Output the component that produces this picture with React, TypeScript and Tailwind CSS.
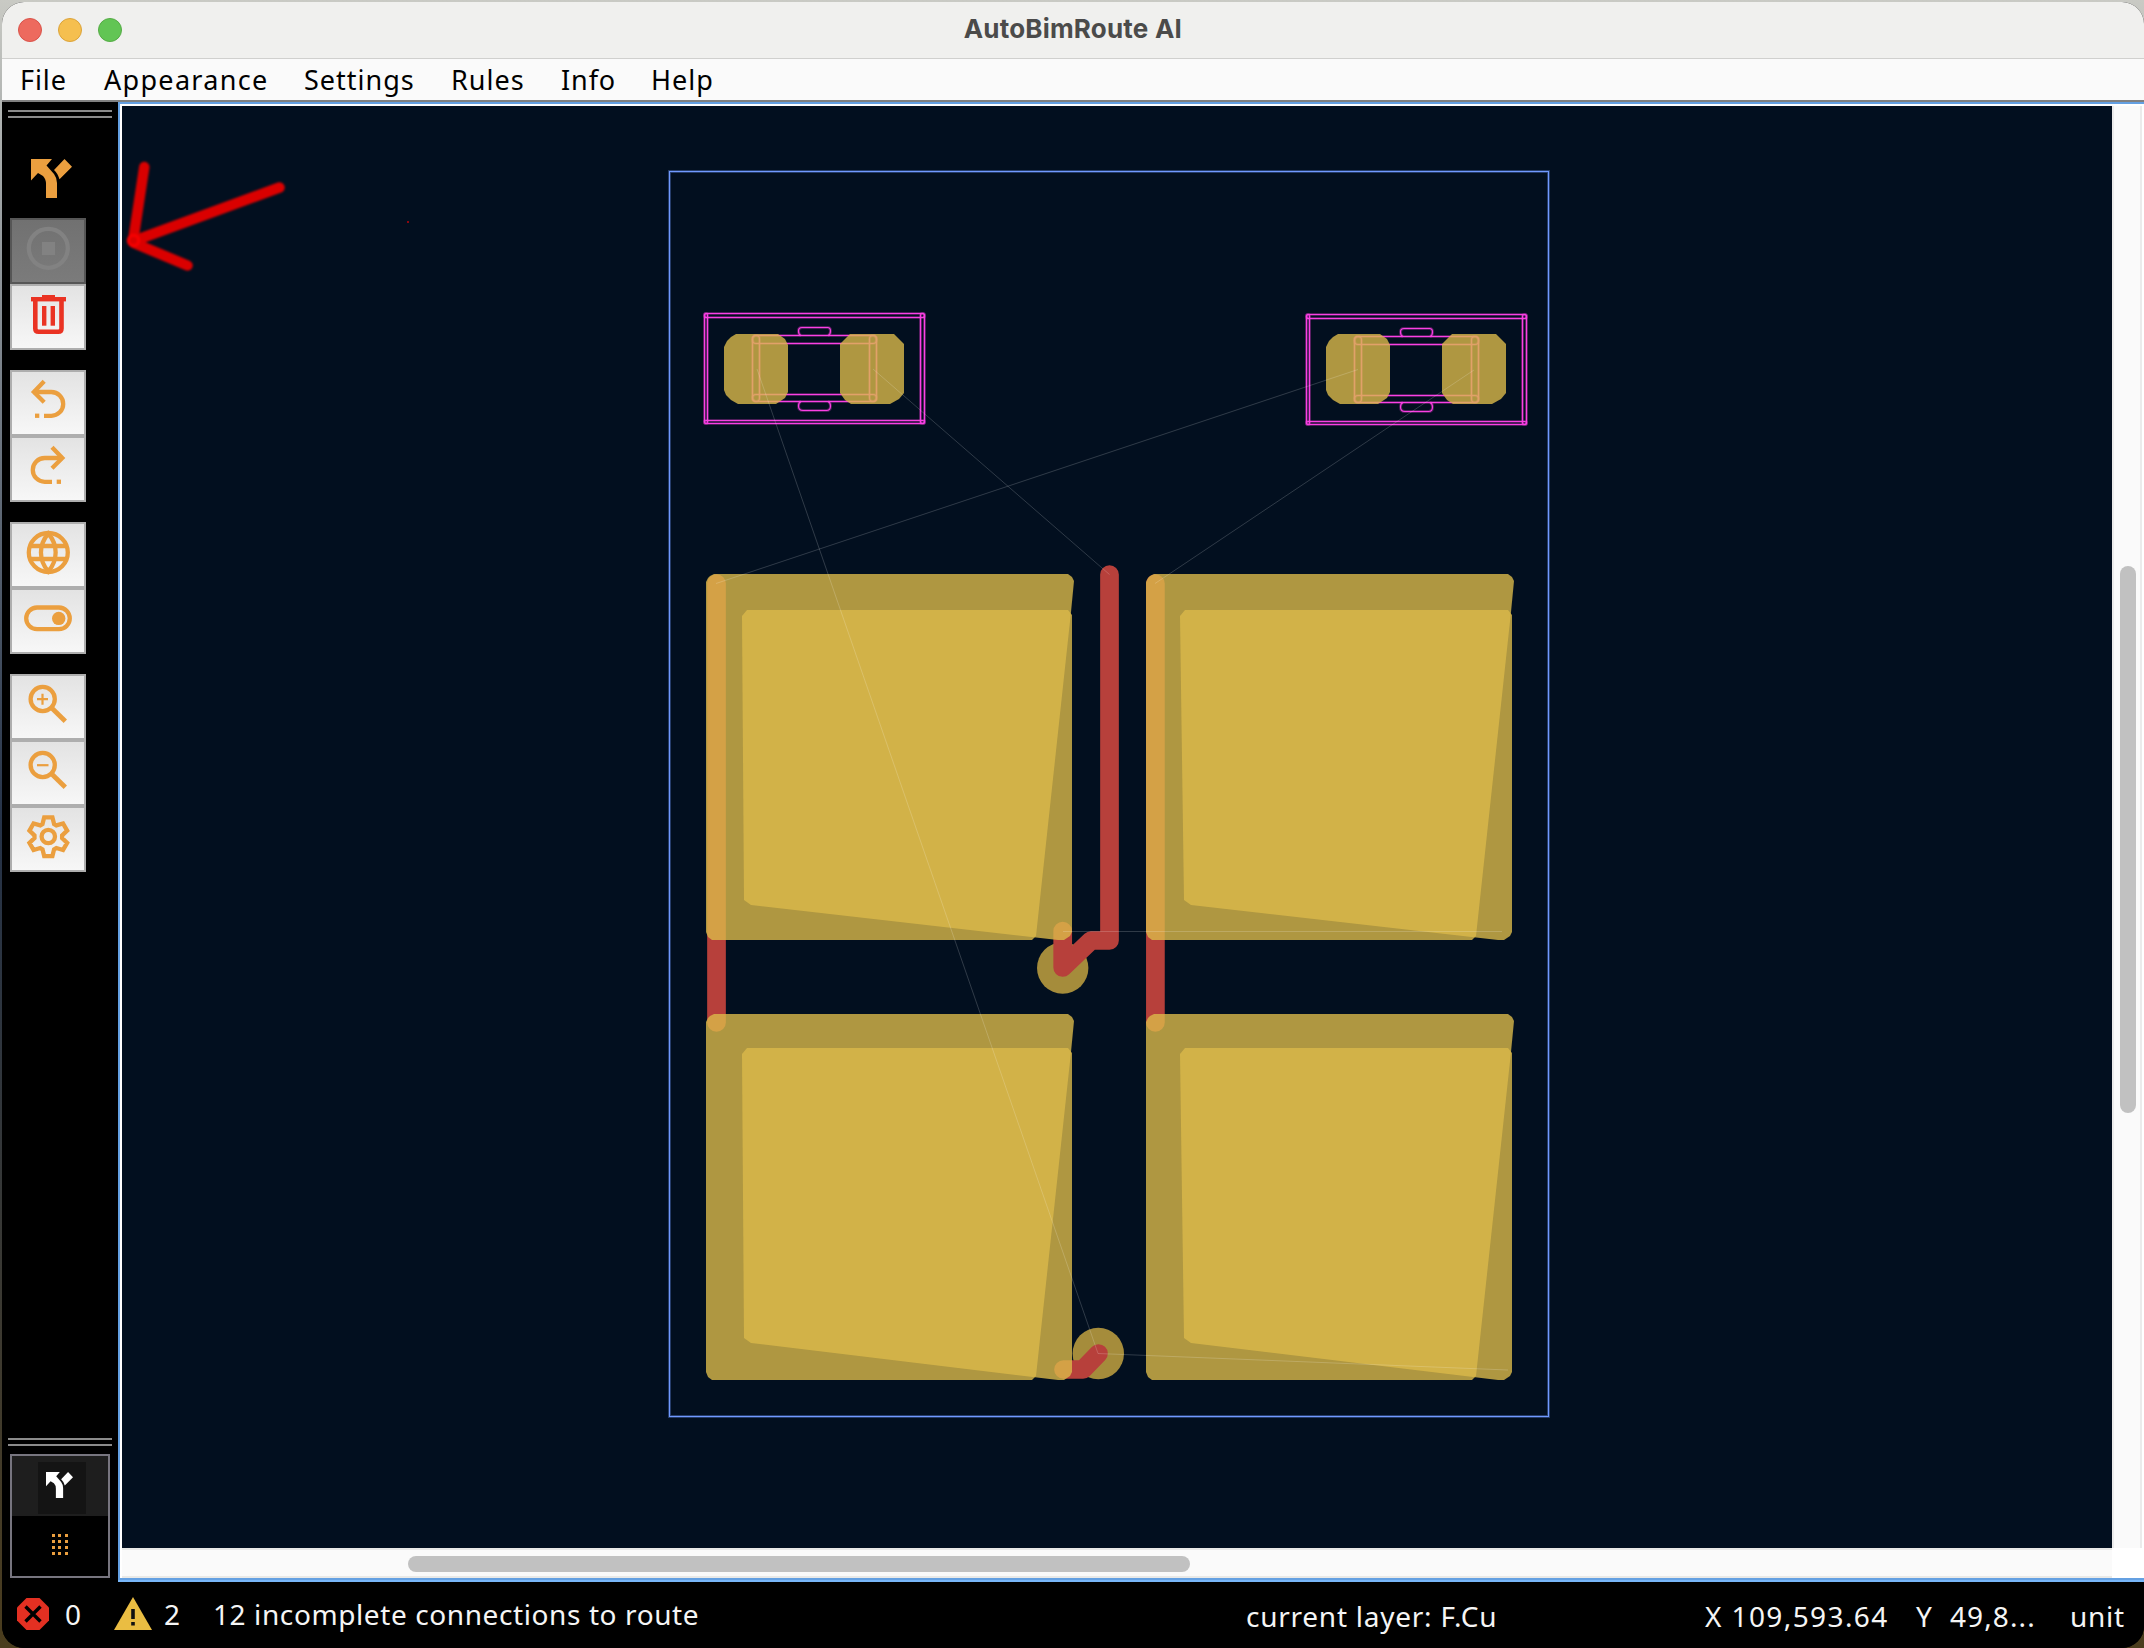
import React from "react";

const ORANGE = "#eb9f3f";

function SplitArrow({ color, className }: { color: string; className: string }) {
  return (
    <svg viewBox="0 0 41 39" preserveAspectRatio="none" className={className} fill={color}>
      <path d="M0 0H21L15.5 6.5L23 15Q26 19 26 24V39H15V25Q15 20 12 17L7 14L0 21.5Z" />
      <path d="M33.5 0L41 7.8L28.5 20.2Q26.5 14 23 11Z" />
    </svg>
  );
}

function ToolButton({ children, disabled }: { children: React.ReactNode; disabled?: boolean }) {
  return (
    <button
      className={
        disabled
          ? "block h-[66px] w-[76px] border-2 border-[#565656] bg-linear-to-b from-[#717171] to-[#7b7b7b]"
          : "block h-[66px] w-[76px] border-2 border-[#aeaeae] bg-linear-to-b from-[#e3e3e3] to-[#f7f7f7]"
      }
    >
      <svg viewBox="2 2 72 62" className="block h-[62px] w-[72px]" fill="none" stroke={ORANGE} strokeWidth={4.3}>
        {children}
      </svg>
    </button>
  );
}

function gearPoints() {
  const base = [
    [-5.8, -12.6],
    [-4.1, -19.4],
    [4.1, -19.4],
    [5.8, -12.6],
  ];
  const pts: string[] = [];
  for (let i = 0; i < 6; i++) {
    const a = (i * Math.PI) / 3;
    for (const [x, y] of base) {
      pts.push(
        `${(38.3 + x * Math.cos(a) - y * Math.sin(a)).toFixed(2)},${(30.7 + x * Math.sin(a) + y * Math.cos(a)).toFixed(2)}`
      );
    }
  }
  return pts.join(" ");
}

function Grip() {
  return <div className="ml-[6px] h-[8px] w-[104px] border-y-2 border-[#8b8b8b]" />;
}

function Sidebar() {
  return (
    <aside className="flex h-[1480px] w-[116px] shrink-0 flex-col bg-black">
      <div className="pt-[8px]">
        <Grip />
      </div>
      <div className="ml-2 mt-[26px] h-[74px] w-[76px] pl-[21px] pt-[15px]">
        <SplitArrow color={ORANGE} className="h-[39px] w-[41px]" />
      </div>
      <div className="ml-2 flex flex-col gap-5">
        <div>
          <ToolButton disabled>
            <g stroke="#828282">
              <circle cx="38.3" cy="30.3" r="19.5" />
              <rect x="32" y="24" width="13" height="13" fill="#828282" stroke="none" />
            </g>
          </ToolButton>
          <ToolButton>
            <g fill="#ea3323" stroke="none">
              <rect x="21" y="13" width="35" height="4.4" />
              <rect x="32" y="11" width="13" height="3" />
              <rect x="32" y="22" width="4.4" height="19.7" />
              <rect x="40.6" y="22" width="4.4" height="19.7" />
            </g>
            <path d="M25.3 16V44.5Q25.3 47.8 28.6 47.8H48.2Q51.5 47.8 51.5 44.5V16" stroke="#ea3323" strokeWidth={4.6} />
          </ToolButton>
        </div>
        <div>
          <ToolButton>
            <path d="M34.2 11.3L23.9 22L34.2 32.3" />
            <path d="M23.5 22H41.3A11.9 11.9 0 0 1 41.3 45.8H34" />
            <rect x="25" y="43.6" width="4.3" height="4.3" fill={ORANGE} stroke="none" />
          </ToolButton>
          <ToolButton>
            <path d="M42 11.3L52.3 22L42 32.3" />
            <path d="M52.5 22H34.7A11.9 11.9 0 0 0 34.7 45.8H42" />
            <rect x="46.7" y="43.6" width="4.3" height="4.3" fill={ORANGE} stroke="none" />
          </ToolButton>
        </div>
        <div>
          <ToolButton>
            <circle cx="38.3" cy="30.5" r="19.5" />
            <path d="M20 24H56.6M20 37H56.6" />
            <path d="M38.3 11.5C28.5 23 28.5 38 38.3 49.5C48.1 38 48.1 23 38.3 11.5Z" />
          </ToolButton>
          <ToolButton>
            <rect x="16.2" y="19.5" width="43.6" height="21.7" rx="10.85" />
            <circle cx="48.7" cy="30.4" r="6.7" fill={ORANGE} stroke="none" />
          </ToolButton>
        </div>
        <div>
          <ToolButton>
            <circle cx="32.7" cy="25" r="12.1" />
            <path d="M41.5 33.8L55.3 47.3" strokeWidth={4.8} />
            <path d="M27 25.2H38M32.5 19.7V30.7" strokeWidth={2.2} />
          </ToolButton>
          <ToolButton>
            <circle cx="32.7" cy="25" r="12.1" />
            <path d="M41.5 33.8L55.3 47.3" strokeWidth={4.8} />
            <path d="M27 25.2H38.5" strokeWidth={2.2} />
          </ToolButton>
          <ToolButton>
            <polygon points={gearPoints()} strokeWidth={4.3} />
            <circle cx="38.3" cy="30.5" r="6.7" />
          </ToolButton>
        </div>
      </div>
      <div className="mt-auto">
        <Grip />
        <div className="ml-2 mt-2 mb-[4px] h-[124px] w-[100px] border-2 border-[#77757f] bg-black">
          <div className="h-[60px] bg-[#1e1e1e] pl-[26px] pt-[6px]">
            <div className="h-[52px] w-[48px] bg-[#141414] pl-[8px] pt-[10px]">
              <SplitArrow color="#ffffff" className="h-[26px] w-[27px]" />
            </div>
          </div>
          <div className="ml-[40px] mt-[18px] grid w-[16px] grid-cols-3 gap-x-[3px] gap-y-[3px]">
            {Array.from({ length: 12 }, (_, i) => (
              <div key={i} className="h-[3px] w-[3px] bg-[#eb9f3f]" />
            ))}
          </div>
        </div>
      </div>
    </aside>
  );
}

/* A copper pad made of two overlapping skewed outlines. */
function Pad({ x, y, ix, iy, bx }: { x: number; y: number; ix: number; iy: number; bx: number }) {
  const outer = [
    [0, 8], [2, 4], [4, 2], [8, 0], [362, 0], [366, 3], [368, 7], [365, 38], [330, 362], [326, 366], [6, 366], [2, 363], [0, 358],
  ];
  const inner = [
    [ix, iy + 6], [ix + 5, iy], [362, iy], [366, iy + 5], [366, 358], [364, 362], [358, 366], [352, 366], [bx + 7, iy + 295], [bx, iy + 290],
  ];
  const str = (p: number[][]) => p.map(([a, b]) => `${x + a},${y + b}`).join(" ");
  return (
    <g fill="#dbb94a" fillOpacity={0.8}>
      <polygon points={str(outer)} />
      <polygon points={str(inner)} />
    </g>
  );
}

function ChipOutline() {
  return (
    <>
      <rect x="704.5" y="313.5" width="220" height="4" rx="2" />
      <rect x="704.5" y="420.5" width="220" height="3" rx="1.5" />
      <rect x="704.5" y="313.5" width="3" height="110" rx="1.5" />
      <rect x="920.5" y="313.5" width="4" height="110" rx="2" />
      <rect x="752.5" y="335.5" width="124" height="8" rx="3.5" />
      <rect x="752.5" y="394.5" width="124" height="7" rx="3.5" />
      <rect x="752.5" y="335.5" width="7" height="66" rx="3.5" />
      <rect x="869.5" y="335.5" width="7" height="66" rx="3.5" />
      <path d="M801 335.5Q798.5 334.5 798.5 331Q798.5 327.5 802 327.5H827.5Q830.5 327.5 830.5 331Q830.5 334.5 828 335.5" />
      <path d="M801 401.5Q798.5 402.5 798.5 406Q798.5 410.5 803 410.5H826.5Q830.5 410.5 830.5 406Q830.5 402.5 828 401.5" />
    </>
  );
}

function Chip({ dx, dy }: { dx: number; dy: number }) {
  return (
    <g>
      <g transform={`translate(${dx} ${dy})`} fill="none">
        <g stroke="#f03ad8" strokeOpacity={0.32} strokeWidth={3}>
          <ChipOutline />
        </g>
        <g stroke="#fa40e4" strokeWidth={1.15}>
          <ChipOutline />
        </g>
      </g>
      <g transform={`translate(${dx} 0)`} fill="#dbb94a" fillOpacity={0.8}>
        <polygon points="724,347 727,341 731,337 736,334 778,334 785,339 788,345 788,392 785,398 776,404 738,404 731,400 726,395 724,390" />
        <polygon points="840,344 850,334 894,334 904,344 904,393 899,399 890,404 851,404 845,400 840,393" />
      </g>
    </g>
  );
}

function Board() {
  return (
    <svg viewBox="122 106 1990 1442" className="block h-[1442px] w-[1990px] bg-[#020f1f]">
      <defs>
        <filter id="soft" x="-10%" y="-10%" width="120%" height="120%">
          <feGaussianBlur stdDeviation="1.3" />
        </filter>
      </defs>
      <rect x="669.5" y="171.5" width="879" height="1245" fill="none" stroke="#6a92f5" strokeOpacity={0.32} strokeWidth={3} />
      <rect x="669.5" y="171.5" width="879" height="1245" fill="none" stroke="#7099ff" strokeWidth={1.1} />
      <circle cx="1062.7" cy="968" r="25.7" fill="#a58c3b" />
      <circle cx="1098.3" cy="1353.5" r="25.7" fill="#a58c3b" />
      <g fill="none" stroke="#b7403b" strokeWidth={18.7} strokeLinecap="round" strokeLinejoin="round">
        <path d="M716.5 583.5V1022.5" />
        <path d="M1155.4 583.5V1022.5" />
        <path d="M1109.5 574.5V940.5H1091L1062.7 967.5V931" />
        <path d="M1098.5 1353.5L1083 1369.5H1063.5" />
      </g>
      <Pad x={706} y={574} ix={36} iy={36} bx={38} />
      <Pad x={1146} y={574} ix={34} iy={36} bx={38} />
      <Pad x={706} y={1014} ix={36} iy={34} bx={38} />
      <Pad x={1146} y={1014} ix={34} iy={34} bx={38} />
      <Chip dx={0} dy={0} />
      <Chip dx={602} dy={1} />
      <g stroke="#ffffff" strokeOpacity={0.18} strokeWidth={1} fill="none">
        <path d="M757 369L1098 1353.5L1508 1370" />
        <path d="M873 369L1109.5 574.5" />
        <path d="M1358 369.5L716 583.5" />
        <path d="M1474 370L1155 583.5" />
        <path d="M1063 931.5H1502" />
      </g>
      <g filter="url(#soft)" fill="none" stroke="#da0404" strokeWidth={10.5} strokeLinecap="round" strokeLinejoin="round">
        <path d="M144.3 167L133.5 238" />
        <path d="M135 240.5L279.5 187.5" />
        <path d="M134 243L187.5 265.5" />
        <circle cx="133.5" cy="240.5" r="1.5" stroke="#f80202" />
      </g>
      <rect x="407" y="221" width="2" height="2" fill="#8a0810" />
    </svg>
  );
}

function Workspace() {
  return (
    <main className="flex h-[1480px] w-[2026px] flex-col border-b-2 border-[#78b6f8]">
      <div className="flex h-[1478px] flex-col border-y-2 border-l-2 border-[#64a0e2] bg-white pl-[2px] pt-[2px]">
        <div className="flex h-[1442px]">
          <Board />
          <div className="h-[1442px] w-[30px] border-x-2 border-[#ebebeb] bg-[#fafafa] pl-[6px] pt-[460px]">
            <div className="h-[547px] w-[16px] rounded-full bg-[#c1c1c1]" />
          </div>
        </div>
        <div className="h-[30px] w-[1990px] border-y-2 border-[#e9e9e7] bg-[#fafafa] pl-[286px] pt-[6px]">
          <div className="h-[16px] w-[782px] rounded-full bg-[#c1c1c1]" />
        </div>
      </div>
    </main>
  );
}

function StatusBar() {
  return (
    <footer className="flex h-[66px] bg-black font-['Noto_Sans'] text-[28px] leading-[38px] whitespace-nowrap text-[#f5f5f5]">
      <svg viewBox="0 0 32 32" className="ml-[15px] mt-4 h-8 w-8 shrink-0">
        <path d="M9.5 0H22.5L32 9.5V22.5L22.5 32H9.5L0 22.5V9.5Z" fill="#e33022" />
        <path d="M8.5 8.5L23.5 23.5M23.5 8.5L8.5 23.5" stroke="#000" strokeWidth="3.4" />
      </svg>
      <span className="ml-[16px] mt-[13px] w-[49px] shrink-0">0</span>
      <svg viewBox="0 0 38 33" className="mt-[15px] h-[33px] w-[38px] shrink-0">
        <path d="M19 0L38 33H0Z" fill="#eabd42" />
        <path d="M19 12V22M19 25V28.5" stroke="#111" strokeWidth="3.6" />
      </svg>
      <span className="ml-[12px] mt-[13px] w-[49px] shrink-0">2</span>
      <span className="mt-[13px] w-[1033px] shrink-0 tracking-[0.6px]">12 incomplete connections to route</span>
      <span className="mt-[15px] w-[459px] shrink-0 tracking-[0.75px]">current layer: F.Cu</span>
      <span className="mt-[15px] w-[211px] shrink-0 tracking-[1.4px]">X 109,593.64</span>
      <span className="mt-[15px] w-[34px] shrink-0">Y</span>
      <span className="mt-[15px] w-[120px] shrink-0 tracking-[1.1px]">49,8...</span>
      <span className="mt-[15px] shrink-0 tracking-[0.7px]">unit</span>
    </footer>
  );
}

export default function App() {
  return (
    <div className="h-[1648px] w-[2144px] overflow-hidden bg-linear-to-b from-[#c9cac4] via-[#253247] to-[#4b3d1d] pl-[2px] pt-[2px]">
      <div className="h-[1646px] w-[2142px] overflow-hidden rounded-[22px] bg-black">
        <header className="flex h-[57px] items-center justify-between border-b border-[#d0d0ce] bg-[#f0f0ee] pl-[16px]">
          <div className="flex gap-4">
            <div className="h-6 w-6 rounded-full border border-[#d9534a] bg-[#ed6a5e]" />
            <div className="h-6 w-6 rounded-full border border-[#dba33a] bg-[#f5bf4f]" />
            <div className="h-6 w-6 rounded-full border border-[#55ab45] bg-[#62c554]" />
          </div>
          <h1 className="mr-[962px] mb-[2px] font-['Inter'] text-[26px] leading-none font-bold tracking-[0.2px] whitespace-nowrap text-[#4b4b4a]">
            AutoBimRoute AI
          </h1>
        </header>
        <nav className="flex h-[43px] border-b-2 border-[#808080] bg-[#fafafa] pl-[18px] pt-[2px] font-['Noto_Sans'] text-[27px] leading-[38px] whitespace-nowrap text-black">
          <span className="w-[84px] tracking-[0.9px]">File</span>
          <span className="w-[200px] tracking-[1.3px]">Appearance</span>
          <span className="w-[147px] tracking-[1px]">Settings</span>
          <span className="w-[110px] tracking-[1px]">Rules</span>
          <span className="w-[90px] tracking-[0.9px]">Info</span>
          <span className="tracking-[1px]">Help</span>
        </nav>
        <div className="flex h-[1480px]">
          <Sidebar />
          <Workspace />
        </div>
        <StatusBar />
      </div>
    </div>
  );
}
